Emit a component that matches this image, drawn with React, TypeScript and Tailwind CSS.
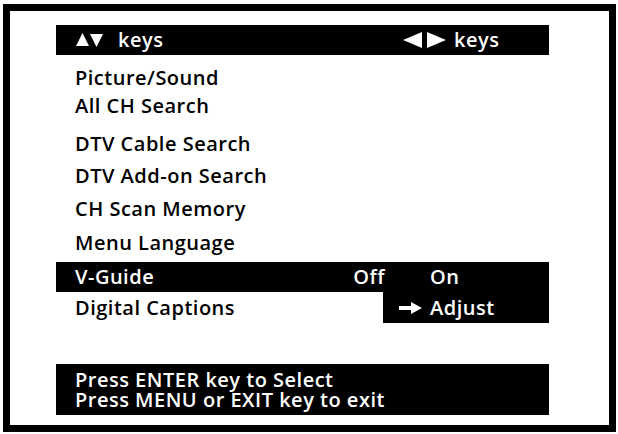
const items = [
  { label: 'Picture/Sound', cls: 'mt-[11px]' },
  { label: 'All CH Search', cls: 'mt-[4px]' },
  { label: 'DTV Cable Search', cls: 'mt-[14px]' },
  { label: 'DTV Add-on Search', cls: 'mt-[8px]' },
  { label: 'CH Scan Memory', cls: 'mt-[9px]' },
  { label: 'Menu Language', cls: 'mt-[10px]' },
];

function UpDown() {
  return (
    <svg width="28" height="14" viewBox="0 0 28 14" className="shrink-0">
      <polygon points="0,13 6.5,0 13,13" fill="white" />
      <polygon points="14,1 27,1 20.5,14" fill="white" />
    </svg>
  );
}

function LeftRight() {
  return (
    <svg width="44" height="16" viewBox="0 0 44 16" className="shrink-0">
      <polygon points="0,8 19,0 19,16" fill="white" />
      <polygon points="24,0 43,8 24,16" fill="white" />
    </svg>
  );
}

function Arrow() {
  return (
    <svg width="23" height="12" viewBox="0 0 23 12" className="shrink-0">
      <rect x="0" y="4" width="14" height="4" fill="white" />
      <polygon points="12,0 23,6 12,12" fill="white" />
    </svg>
  );
}

export default function App() {
  return (
    <div className="w-[618px] h-[434px] bg-white pl-[3px] pt-[4px] font-['Open_Sans',sans-serif] font-semibold text-[20px] tracking-[0.5px] leading-[24px] text-black">
      <div className="w-[613px] h-[428px] border-[7px] border-black flex flex-col pl-[46px] pt-[14px]">
        <div className="w-[493px] h-[30px] bg-black text-white flex items-center">
          <div className="w-[347px] flex items-center pl-[20px] gap-[14px]">
            <UpDown />
            <span>keys</span>
          </div>
          <div className="flex items-center gap-[7px]">
            <LeftRight />
            <span>keys</span>
          </div>
        </div>

        {items.map((item) => (
          <div key={item.label} className={`pl-[19px] h-[24px] ${item.cls}`}>
            {item.label}
          </div>
        ))}

        <div className="mt-[7px] w-[493px] h-[30px] bg-black text-white flex items-center">
          <span className="pl-[19px]">V-Guide</span>
          <span className="ml-auto mr-[45px]">Off</span>
          <span className="w-[119px]">On</span>
        </div>
        <div className="w-[493px] h-[31px] flex items-center">
          <span className="pl-[19px]">Digital Captions</span>
          <div className="ml-auto w-[166px] h-[31px] bg-black text-white flex items-center pl-[16px] gap-[8px]">
            <Arrow />
            <span>Adjust</span>
          </div>
        </div>

        <div className="mt-[41px] w-[493px] h-[51px] bg-black text-white pl-[19px] pt-[6px] leading-[20px]">
          <div>Press ENTER key to Select</div>
          <div>Press MENU or EXIT key to exit</div>
        </div>
      </div>
    </div>
  );
}
